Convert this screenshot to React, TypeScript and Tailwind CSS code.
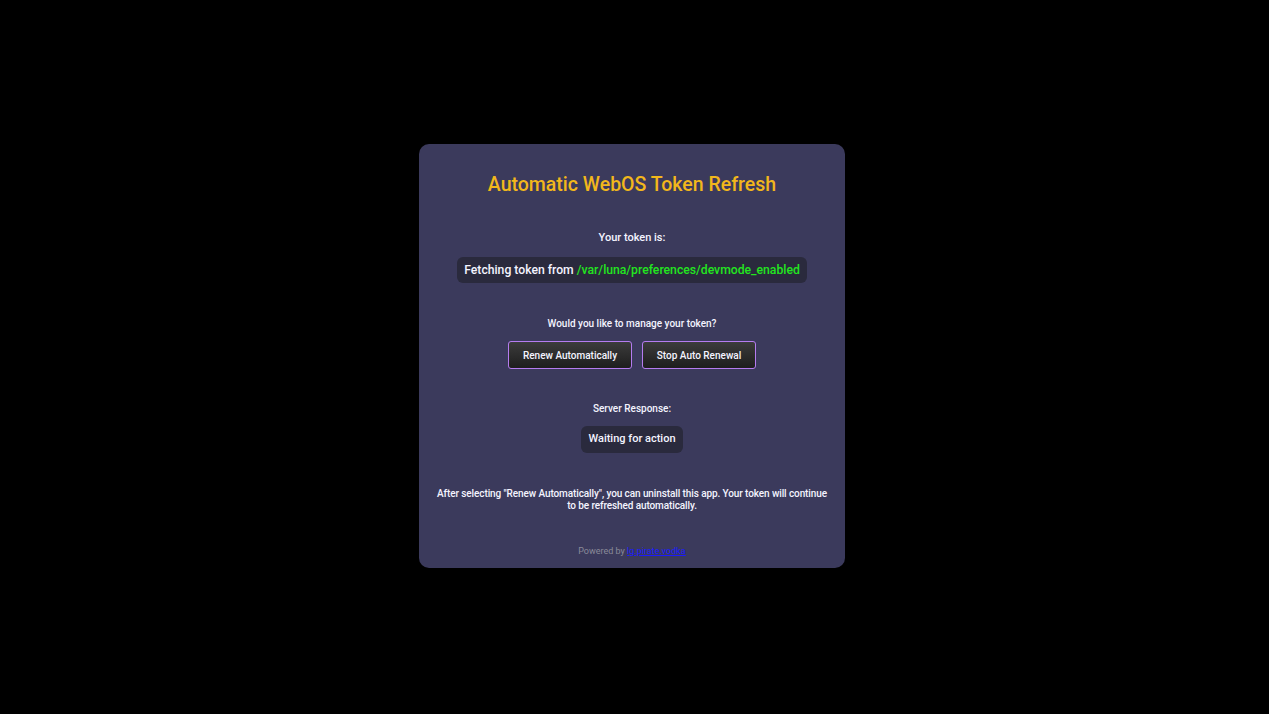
import React from "react";

export default function App() {
  return (
    <div className="min-h-screen w-full bg-black flex items-center justify-center pr-[5px] pb-[2px]" style={{ fontFamily: "Roboto, 'Noto Sans', sans-serif" }}>
      <div className="w-[426px] h-[424px] bg-[#3b3a5c] rounded-[10px] flex flex-col items-center px-2 text-white">
        <h1 className="mt-[28px] h-[26px] leading-[26px] text-[19.5px] font-medium text-[#f2b71b]">Automatic WebOS Token Refresh</h1>
        <div className="mt-[32px] h-[16px] leading-[16px] text-[11px] font-medium text-[#f4f4ff]">Your token is:</div>
        <div className="mt-[11px] h-[26px] px-[7px] flex items-center bg-[#2a2a3d] rounded-[6px] text-[12.2px] font-medium text-[#f4f4ff]">
          Fetching token from&nbsp;<span className="text-[#23e61f]">/var/luna/preferences/devmode_enabled</span>
        </div>
        <div className="mt-[34px] h-[14px] leading-[14px] text-[10px] font-medium text-[#f4f4ff]">Would you like to manage your token?</div>
        <div className="mt-[10px] flex gap-[10px]">
          <button className="h-[28px] w-[124px] rounded-[3px] border border-[#b57cf0] bg-gradient-to-b from-[#3c3c3c] to-[#1e1e1e] text-[10px] font-medium text-[#f4f4ff]">Renew Automatically</button>
          <button className="h-[28px] w-[114px] rounded-[3px] border border-[#b57cf0] bg-gradient-to-b from-[#3c3c3c] to-[#1e1e1e] text-[10px] font-medium text-[#f4f4ff]">Stop Auto Renewal</button>
        </div>
        <div className="mt-[33px] h-[14px] leading-[14px] text-[10px] font-medium text-[#f4f4ff]">Server Response:</div>
        <div className="mt-[10px] h-[27px] px-[7px] flex items-center bg-[#2a2a3d] rounded-[6px] text-[11px] font-medium text-[#f4f4ff]">Waiting for action</div>
        <p className="mt-[35px] max-w-[398px] text-center text-[10px] leading-[12px] font-medium tracking-[-0.1px] text-[#f4f4ff]">
          After selecting "Renew Automatically", you can uninstall this app. Your token will continue to be refreshed automatically.
        </p>
        <div className="mt-[33px] text-[9px] leading-[12px] text-[#8a8a99]">
          Powered by <a href="#" className="text-[#1a1aff] underline">lg.pirate.vodka</a>
        </div>
      </div>
    </div>
  );
}
